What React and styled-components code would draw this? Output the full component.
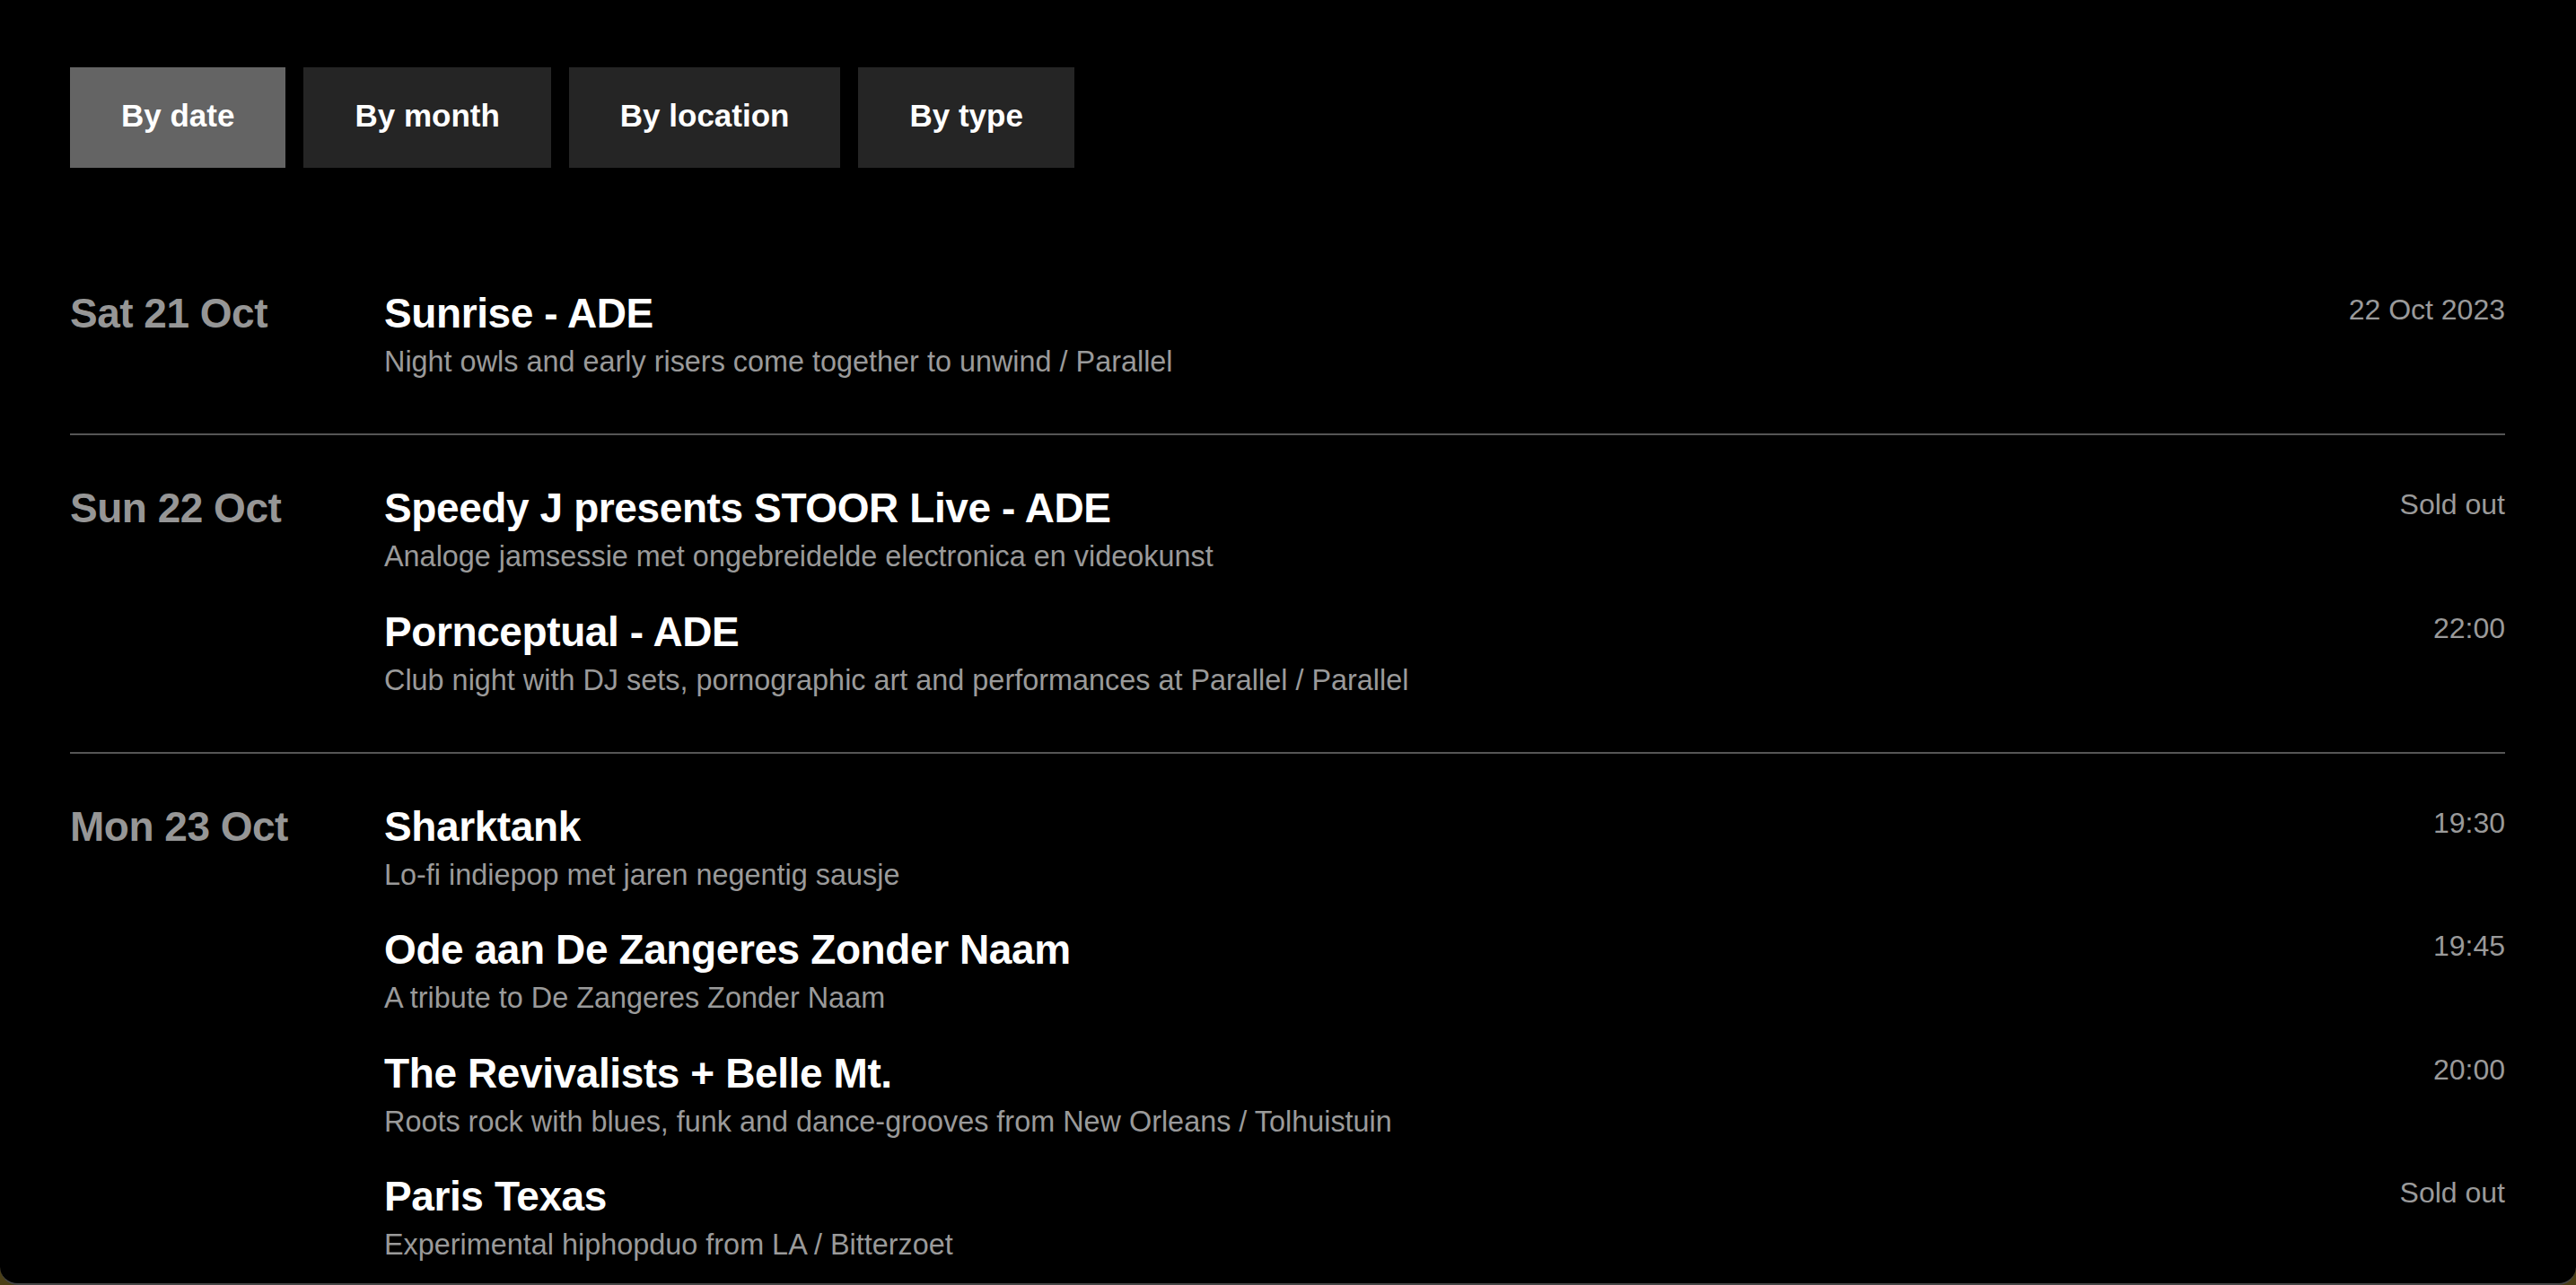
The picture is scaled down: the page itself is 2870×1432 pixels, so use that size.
import React from "react";
import styled, { createGlobalStyle } from "styled-components";

const GlobalStyle = createGlobalStyle`
  html, body {
    margin: 0;
    padding: 0;
    background: #4b3f16;
  }
  * {
    box-sizing: border-box;
  }
`;

const Window = styled.div`
  height: 1432px;
  overflow: hidden;
  background: #000;
  border-bottom: 2px solid #454545;
  border-radius: 0 0 20px 20px;
  padding: 75px 79px 0 78px;
  font-family: "Liberation Sans", Arial, Helvetica, sans-serif;
  color: #fff;
`;

const Tabs = styled.div`
  display: flex;
  gap: 20px;
`;

const Tab = styled.button`
  height: 112px;
  padding: 0 57px 5px;
  border: none;
  background: ${(p) => (p.$active ? "#646464" : "#252525")};
  color: #fff;
  font-family: inherit;
  font-size: 35px;
  font-weight: 700;
  cursor: pointer;
`;

const List = styled.div`
  margin-top: 81px;
`;

const Group = styled.section`
  display: flex;
  padding: 55px 0 57px;
  & + & {
    border-top: 2px solid #555;
  }
`;

const DateLabel = styled.div`
  flex: 0 0 350px;
  font-size: 46px;
  line-height: 52px;
  font-weight: 700;
  letter-spacing: -0.5px;
  color: #969696;
`;

const Events = styled.div`
  flex: 1;
  display: flex;
  flex-direction: column;
  gap: 34.5px;
`;

const Event = styled.div`
  display: flex;
  justify-content: space-between;
  align-items: flex-start;
`;

const Title = styled.div`
  font-size: 46px;
  line-height: 52px;
  font-weight: 700;
  letter-spacing: -0.4px;
  color: #fff;
`;

const Sub = styled.div`
  margin-top: 6px;
  font-size: 32.4px;
  line-height: 45px;
  color: #9a9a9a;
`;

const Meta = styled.div`
  font-size: 32px;
  line-height: 45px;
  color: #9a9a9a;
  white-space: nowrap;
`;

const tabs = ["By date", "By month", "By location", "By type"];

const groups = [
  {
    date: "Sat 21 Oct",
    events: [
      {
        title: "Sunrise - ADE",
        sub: "Night owls and early risers come together to unwind / Parallel",
        meta: "22 Oct 2023",
      },
    ],
  },
  {
    date: "Sun 22 Oct",
    events: [
      {
        title: "Speedy J presents STOOR Live - ADE",
        sub: "Analoge jamsessie met ongebreidelde electronica en videokunst",
        meta: "Sold out",
      },
      {
        title: "Pornceptual - ADE",
        sub: "Club night with DJ sets, pornographic art and performances at Parallel / Parallel",
        meta: "22:00",
      },
    ],
  },
  {
    date: "Mon 23 Oct",
    events: [
      {
        title: "Sharktank",
        sub: "Lo-fi indiepop met jaren negentig sausje",
        meta: "19:30",
      },
      {
        title: "Ode aan De Zangeres Zonder Naam",
        sub: "A tribute to De Zangeres Zonder Naam",
        meta: "19:45",
      },
      {
        title: "The Revivalists + Belle Mt.",
        sub: "Roots rock with blues, funk and dance-grooves from New Orleans / Tolhuistuin",
        meta: "20:00",
      },
      {
        title: "Paris Texas",
        sub: "Experimental hiphopduo from LA / Bitterzoet",
        meta: "Sold out",
      },
    ],
  },
];

export default function App() {
  return (
    <>
      <GlobalStyle />
      <Window>
        <Tabs>
          {tabs.map((t, i) => (
            <Tab key={t} $active={i === 0}>
              {t}
            </Tab>
          ))}
        </Tabs>
        <List>
          {groups.map((g) => (
            <Group key={g.date}>
              <DateLabel>{g.date}</DateLabel>
              <Events>
                {g.events.map((e) => (
                  <Event key={e.title}>
                    <div>
                      <Title>{e.title}</Title>
                      <Sub>{e.sub}</Sub>
                    </div>
                    <Meta>{e.meta}</Meta>
                  </Event>
                ))}
              </Events>
            </Group>
          ))}
        </List>
      </Window>
    </>
  );
}
